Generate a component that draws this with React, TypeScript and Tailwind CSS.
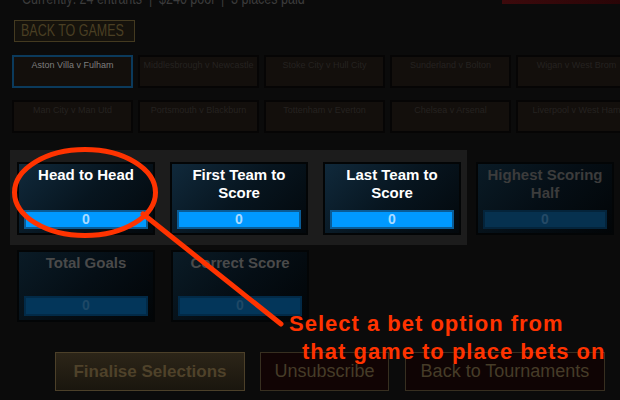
import React from "react";

const games = [
  "Aston Villa v Fulham",
  "Middlesbrough v Newcastle",
  "Stoke City v Hull City",
  "Sunderland v Bolton",
  "Wigan v West Brom",
  "Man City v Man Utd",
  "Portsmouth v Blackburn",
  "Tottenham v Everton",
  "Chelsea v Arsenal",
  "Liverpool v West Ham",
];

function BetCard({ title, active, muted }: { title: string; active?: boolean; muted?: boolean }) {
  return (
    <div
      className={
        "flex flex-col justify-between w-[138px] border-2 border-[#030506] px-[5px] pb-[4px] pt-[2px] " +
        (muted ? "h-[72px] " : "h-[73px] ") +
        (active
          ? "bg-[linear-gradient(135deg,#10293b_0%,#07151f_50%,#03080c_100%)]"
          : "bg-[linear-gradient(135deg,#0a1b26_0%,#050e15_50%,#020507_100%)]")
      }
    >
      <div
        className={
          "text-center font-bold text-[15px] leading-[18px] " +
          (active ? "text-white" : muted ? "text-[#4a4a4a]" : "text-[#3c3c3c]")
        }
      >
        {title}
      </div>
      <div
        className={
          "border-2 text-center font-bold text-[14px] leading-[15px] " +
          (active
            ? "h-[19px] bg-[#0099ff] border-[#0a5c96] text-[#a9dbff]"
            : muted
            ? "h-[20px] bg-[#03365a] border-[#022a47] text-[#1e4866]"
            : "h-[19px] bg-[#06314f] border-[#04243b] text-[#254a66]")
        }
      >
        0
      </div>
    </div>
  );
}

export default function App() {
  return (
    <div
      className="relative w-[620px] h-[400px] overflow-hidden bg-[#0b0b0b]"
      style={{ fontFamily: '"Liberation Sans", Arial, sans-serif' }}
    >
      <div className="flex justify-between items-start mt-[-9px] h-[13px]">
        <span className="ml-[22px] inline-block origin-left scale-x-[0.78] whitespace-nowrap text-[16px] leading-[16px] text-[#3c3c3c]">
          Currently: 24 entrants &nbsp;|&nbsp; $240 pool &nbsp;|&nbsp; 3 places paid
        </span>
        <div className="w-[118px] h-[13px] bg-[linear-gradient(90deg,#3d0a0c,#2a0507)]" />
      </div>

      <div className="ml-[14px] mt-[16px] w-[121px] h-[22px] border border-[#443a20] bg-[#15120c] flex items-center pl-[6px] overflow-hidden">
        <span className="inline-block origin-left scale-x-[0.78] whitespace-nowrap text-[16px] leading-[16px] text-[#4a3f23]">
          BACK TO GAMES
        </span>
      </div>

      <div className="ml-[12px] mt-[13px] grid grid-cols-[repeat(5,121px)] gap-x-[5px] gap-y-[12px]">
        {games.map((g, i) => (
          <div
            key={g}
            className={
              "h-[33px] border-2 bg-[#130f0c] text-center text-[9px] leading-[11px] pt-[3px] whitespace-nowrap overflow-hidden " +
              (i === 0 ? "border-[#0b3a5c] text-[#7e7e7e]" : "border-[#060505] text-[#252220]")
            }
          >
            {g}
          </div>
        ))}
      </div>

      <div className="ml-[10px] mt-[17px] flex items-start">
        <div className="flex gap-[15px] bg-[#1c1c1c] pt-[12px] pb-[10px] pl-[7px] pr-[6px]">
          <BetCard title="Head to Head" active />
          <BetCard title="First Team to Score" active />
          <BetCard title="Last Team to Score" active />
        </div>
        <div className="ml-[9px] mt-[12px]">
          <BetCard title="Highest Scoring Half" />
        </div>
      </div>

      <div className="ml-[17px] mt-[5px] flex gap-[16px]">
        <BetCard title="Total Goals" muted />
        <BetCard title="Correct Score" muted />
      </div>

      <div className="ml-[55px] mt-[30px] flex gap-[15px]">
        <div className="w-[190px] h-[39px] border border-[#4c4029] bg-[linear-gradient(180deg,#2c2518,#1a160e)] flex items-center justify-center font-bold text-[17px] text-[#4f422a]">
          Finalise Selections
        </div>
        <div className="w-[129px] h-[39px] border border-[#372f20] bg-[#110404] flex items-center justify-center text-[18px] text-[#463c28]">
          Unsubscribe
        </div>
        <div className="ml-[1px] w-[200px] h-[39px] border border-[#372f20] bg-[#0f0404] flex items-center justify-center text-[18px] text-[#463c28]">
          Back to Tournaments
        </div>
      </div>

      <svg className="absolute left-0 top-0 pointer-events-none" width="620" height="400" viewBox="0 0 620 400">
        <ellipse cx="85" cy="192.5" rx="70.5" ry="43" fill="none" stroke="#ff3300" strokeWidth="5" />
        <line x1="143" y1="214" x2="281" y2="324" stroke="#ff3300" strokeWidth="5" strokeLinecap="round" />
      </svg>
      <div className="absolute left-[289px] top-[310px] font-bold text-[22px] leading-[28px] tracking-[1px] text-[#ff3300] whitespace-nowrap">
        <div>Select a bet option from</div>
        <div className="pl-[13px]">that game to place bets on</div>
      </div>
    </div>
  );
}
